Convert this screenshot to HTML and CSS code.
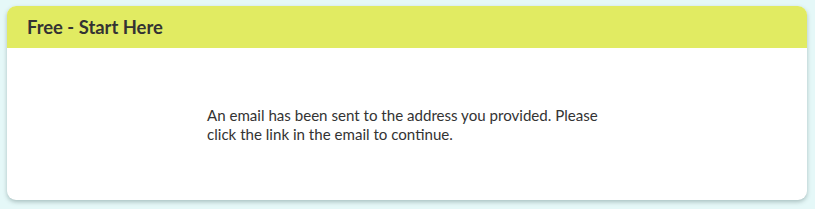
FILE: index.html
```html
<!DOCTYPE html>
<html>
<head>
<meta charset="utf-8">
<link rel="stylesheet" href="styles.css">
</head>
<body>
<div class="card">
  <div class="card-header">Free - Start Here</div>
  <div class="card-body">
    <p class="message">An email has been sent to the address you provided. Please click the link in the email to continue.</p>
  </div>
</div>
</body>
</html>
```
FILE: styles.css
```css
html, body {
  margin: 0;
  padding: 0;
}
body {
  background: #e5f8f8;
  font-family: "Lato", "Noto Sans", sans-serif;
  color: #333;
  padding: 6px 8px 9px 7px;
}
.card {
  background: #fff;
  border-radius: 9px;
  box-shadow: 0 2px 4px rgba(60, 90, 90, 0.35);
  overflow: hidden;
}
.card-header {
  background: #e1eb62;
  height: 42px;
  display: flex;
  align-items: center;
  padding-left: 20px;
  font-weight: bold;
  font-size: 18.4px;
}
.card-body {
  height: 150px;
  padding-top: 2px;
  display: flex;
  align-items: center;
  justify-content: center;
}
.message {
  margin: 0;
  width: 400px;
  font-size: 15.1px;
  line-height: 19px;
}
```
